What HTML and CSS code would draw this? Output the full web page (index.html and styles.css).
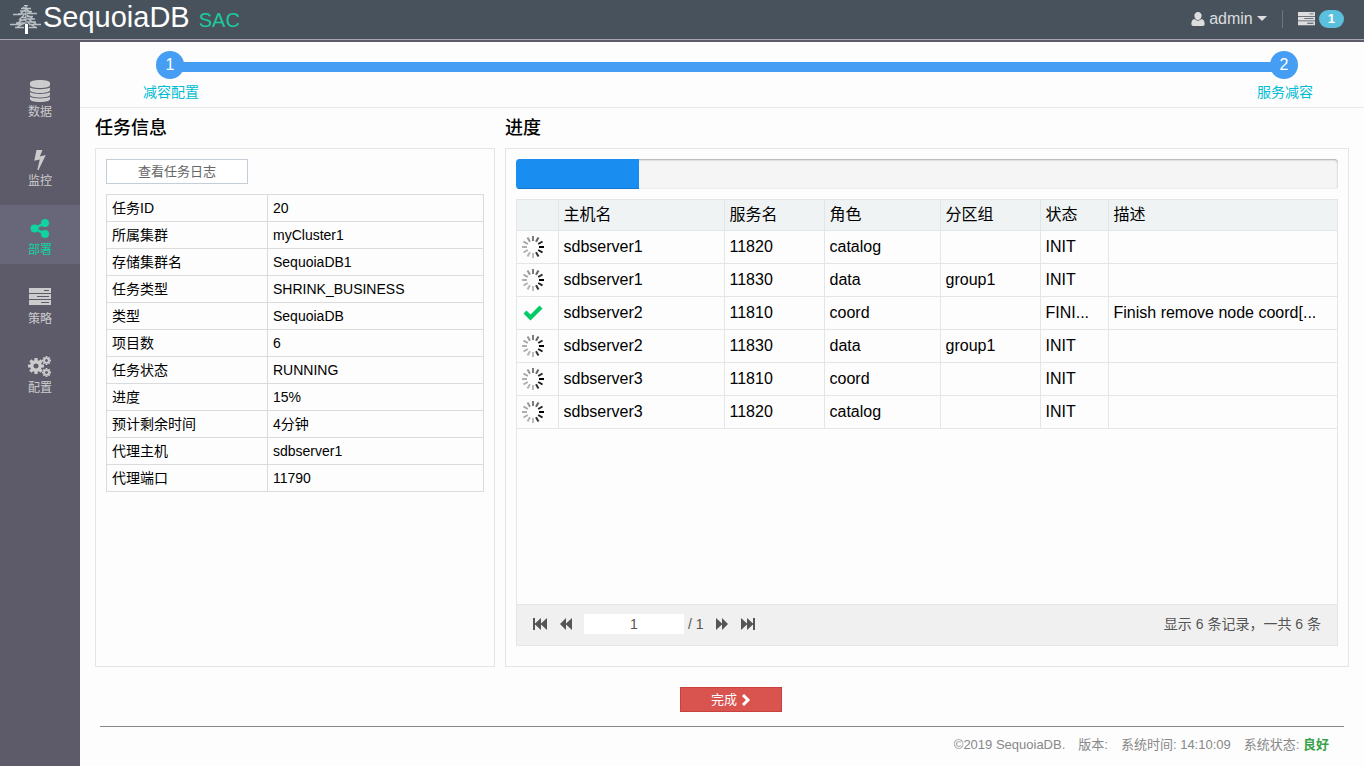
FILE: index.html
```
<!DOCTYPE html>
<html lang="zh-CN">
<head>
<meta charset="utf-8">
<title>SequoiaDB SAC</title>
<link rel="stylesheet" href="styles.css">
</head>
<body>
<svg class="defs" aria-hidden="true">
  <symbol id="servers" viewBox="0 0 22 18">
    <path fill="currentColor" fill-rule="evenodd" d="M0 0h22v5H0zM15 2v1h5V2zM0 6h22v5H0zM8 8v1h12V8zM0 12h22v5H0zM12 14v1h8v-1z"/>
  </symbol>
  <symbol id="spinner" viewBox="-11 -11 22 22">
    <g stroke="#000" stroke-width="2">
      <path d="M0-6V-11" opacity=".5"/>
      <path d="M0-6V-11" opacity=".6" transform="rotate(30)"/>
      <path d="M0-6V-11" opacity=".85" transform="rotate(60)"/>
      <path d="M0-6V-11" transform="rotate(90)"/>
      <path d="M0-6V-11" opacity=".9" transform="rotate(120)"/>
      <path d="M0-6V-11" opacity=".8" transform="rotate(150)"/>
      <path d="M0-6V-11" opacity=".25" transform="rotate(180)"/>
      <path d="M0-6V-11" opacity=".28" transform="rotate(210)"/>
      <path d="M0-6V-11" opacity=".3" transform="rotate(240)"/>
      <path d="M0-6V-11" opacity=".3" transform="rotate(270)"/>
      <path d="M0-6V-11" opacity=".35" transform="rotate(300)"/>
      <path d="M0-6V-11" opacity=".4" transform="rotate(330)"/>
    </g>
  </symbol>
  <symbol id="gear" viewBox="-10 -10 20 20">
    <circle r="5.3" fill="none" stroke="currentColor" stroke-width="4.2"/>
    <g stroke="currentColor" stroke-width="4">
      <path d="M0-6V-10M0 6V10M-6 0H-10M6 0H10"/>
      <path d="M0-6V-10M0 6V10M-6 0H-10M6 0H10" transform="rotate(45)"/>
    </g>
  </symbol>
</svg>
<header class="topbar">
  <a class="brand" href="#">
    <svg class="brand-tree" viewBox="0 0 32 30" aria-hidden="true">
      <path fill="none" stroke="#b9bfc3" stroke-width="1.300" d="M14 .7h4M11 3.500h10M13 2l6 4M10 6h6M17 6.500h5M8 9h8M3 9.500h8M17 8.500h10M17 6l6 3M15 5l-5 4M12 12.500h4M17 11.500h6M9 15h7M17 14h8M14 10l-5 5M17 10l6 4M6 18h9M17 17h9M15 14l-8 4M18 14l8 5M0 19.500h11M19 19.500h12M5 22.500h9M19 22.500h8M15 18l-8 4M18 18l9 5"/>
      <path fill="#fff" d="M15 19h3v10h-3z"/>
      <path fill="#d3d8dc" d="M15.500 0h1v19h-1z"/>
    </svg>
    <span class="brand-name">SequoiaDB</span>
    <span class="brand-sub">SAC</span>
  </a>
  <div class="tools">
    <button class="tool" type="button">
      <svg width="14" height="14" viewBox="0 0 14 14" aria-hidden="true"><path fill="currentColor" d="M7 0a3.600 3.600 0 0 1 3.600 4C10.500 6 9 8 7 8S3.500 6 3.400 4A3.600 3.600 0 0 1 7 0zM3.500 7Q7 10.500 10.500 7C13 7.500 14 10 13.500 13q-.5 1-2 1h-9q-1.500 0-2-1C0 10 1 7.500 3.500 7z"/></svg>
      <span>admin</span>
      <svg width="10" height="5" viewBox="0 0 10 5" aria-hidden="true"><path fill="currentColor" d="M0 0h10L5 5z"/></svg>
    </button>
    <span class="divider"></span>
    <button class="tool tasks" type="button" aria-label="任务">
      <svg width="17" height="14" aria-hidden="true"><use href="#servers"/></svg>
      <span class="badge">1</span>
    </button>
  </div>
</header>
<div class="shell">
  <nav class="sidebar">
    <a class="nav-item" href="#">
      <svg width="20" height="22" viewBox="0 0 20 22" aria-hidden="true"><path fill="currentColor" d="M0 3C0 1 4 0 10 0s10 1 10 3v2c0 2-4 3-10 3S0 7 0 5zM0 7.500c4 2.300 16 2.300 20 0V10c0 2-4 3-10 3S0 12 0 10zM0 12.300c4 2.300 16 2.300 20 0v2.200c0 2-4 3-10 3s-10-1-10-3zM0 16.800c4 2.300 16 2.300 20 0V19c0 2-4 3-10 3S0 21 0 19z"/></svg>
      <span>数据</span>
    </a>
    <a class="nav-item" href="#">
      <svg width="20" height="22" viewBox="0 0 20 22" aria-hidden="true"><path fill="currentColor" d="M6.500 1h6L9.800 7.400l6-1.500L8.500 21H7.300l2.500-10.500-5.600 1.300z"/></svg>
      <span>监控</span>
    </a>
    <a class="nav-item active" href="#">
      <svg width="20" height="22" viewBox="0 0 20 22" aria-hidden="true"><g fill="currentColor"><circle cx="4.500" cy="10.500" r="4"/><circle cx="15" cy="5" r="4"/><circle cx="15" cy="16" r="4"/></g><path fill="none" stroke="currentColor" stroke-width="2.500" d="M15 5L4.500 10.500 15 16"/></svg>
      <span>部署</span>
    </a>
    <a class="nav-item" href="#">
      <svg width="22" height="22" viewBox="0 0 22 22" aria-hidden="true"><use href="#servers" y="1" width="22" height="18"/></svg>
      <span>策略</span>
    </a>
    <a class="nav-item" href="#">
      <svg width="24" height="22" viewBox="0 0 24 22" aria-hidden="true"><use href="#gear" x="0" y="2" width="16" height="16"/><use href="#gear" x="14" y="0" width="9" height="9"/><use href="#gear" x="14" y="12" width="9" height="9"/></svg>
      <span>配置</span>
    </a>
  </nav>
  <main class="main">
    <ol class="steps">
      <li class="step"><span class="step-dot">1</span><span class="step-label">减容配置</span></li>
      <li class="step"><span class="step-dot">2</span><span class="step-label">服务减容</span></li>
    </ol>
    <div class="columns">
      <section class="column">
        <h2 class="title">任务信息</h2>
        <div class="panel">
          <button class="btn btn-log" type="button">查看任务日志</button>
          <table class="info">
            <tr><th scope="row">任务ID</th><td>20</td></tr>
            <tr><th scope="row">所属集群</th><td>myCluster1</td></tr>
            <tr><th scope="row">存储集群名</th><td>SequoiaDB1</td></tr>
            <tr><th scope="row">任务类型</th><td>SHRINK_BUSINESS</td></tr>
            <tr><th scope="row">类型</th><td>SequoiaDB</td></tr>
            <tr><th scope="row">项目数</th><td>6</td></tr>
            <tr><th scope="row">任务状态</th><td>RUNNING</td></tr>
            <tr><th scope="row">进度</th><td>15%</td></tr>
            <tr><th scope="row">预计剩余时间</th><td>4分钟</td></tr>
            <tr><th scope="row">代理主机</th><td>sdbserver1</td></tr>
            <tr><th scope="row">代理端口</th><td>11790</td></tr>
          </table>
        </div>
      </section>
      <section class="column">
        <h2 class="title">进度</h2>
        <div class="panel">
          <div class="progress" role="progressbar" aria-label="进度" aria-valuenow="15" aria-valuemin="0" aria-valuemax="100"><div class="progress-fill" style="width:15%"></div></div>
          <div class="grid">
            <table class="nodes">
              <colgroup><col class="c-icon"><col class="c-host"><col class="c-svc"><col class="c-role"><col class="c-group"><col class="c-state"><col></colgroup>
              <thead><tr><th></th><th>主机名</th><th>服务名</th><th>角色</th><th>分区组</th><th>状态</th><th>描述</th></tr></thead>
              <tbody>
                <tr><td><svg class="state" aria-hidden="true"><use href="#spinner"/></svg></td><td>sdbserver1</td><td>11820</td><td>catalog</td><td></td><td>INIT</td><td></td></tr>
                <tr><td><svg class="state" aria-hidden="true"><use href="#spinner"/></svg></td><td>sdbserver1</td><td>11830</td><td>data</td><td>group1</td><td>INIT</td><td></td></tr>
                <tr><td><svg class="state" viewBox="0 0 22 22" aria-hidden="true"><path fill="#0c6" d="M4.500 8.500l4 4L17.500 3.500l3 3L8.500 18.500l-7-7z"/></svg></td><td>sdbserver2</td><td>11810</td><td>coord</td><td></td><td>FINI...</td><td>Finish remove node coord[...</td></tr>
                <tr><td><svg class="state" aria-hidden="true"><use href="#spinner"/></svg></td><td>sdbserver2</td><td>11830</td><td>data</td><td>group1</td><td>INIT</td><td></td></tr>
                <tr><td><svg class="state" aria-hidden="true"><use href="#spinner"/></svg></td><td>sdbserver3</td><td>11810</td><td>coord</td><td></td><td>INIT</td><td></td></tr>
                <tr><td><svg class="state" aria-hidden="true"><use href="#spinner"/></svg></td><td>sdbserver3</td><td>11820</td><td>catalog</td><td></td><td>INIT</td><td></td></tr>
              </tbody>
            </table>
            <div class="pager">
              <button class="page-btn" type="button" aria-label="首页"><svg width="16" height="12" viewBox="0 0 16 12" aria-hidden="true"><path fill="currentColor" d="M1 0h2v5.500L9 0v5.500L15 0v12L9 6.500V12L3 6.500V12H1z"/></svg></button>
              <button class="page-btn" type="button" aria-label="上一页"><svg width="16" height="12" viewBox="0 0 16 12" aria-hidden="true"><path fill="currentColor" d="M8 0v5.500L14 0v12L8 6.500V12L2 6z"/></svg></button>
              <input class="page-input" type="text" value="1" aria-label="页码">
              <span class="page-total">/ 1</span>
              <button class="page-btn" type="button" aria-label="下一页"><svg width="16" height="12" viewBox="0 0 16 12" aria-hidden="true"><path fill="currentColor" d="M2 0l6 5.500V0l6 6-6 6V6.500L2 12z"/></svg></button>
              <button class="page-btn" type="button" aria-label="末页"><svg width="16" height="12" viewBox="0 0 16 12" aria-hidden="true"><path fill="currentColor" d="M1 0l6 5.500V0l6 5.500V0h2v12h-2V6.500L7 12V6.500L1 12z"/></svg></button>
              <span class="page-info">显示 6 条记录，一共 6 条</span>
            </div>
          </div>
        </div>
      </section>
    </div>
    <div class="actions">
      <button class="btn btn-done" type="button"><span>完成</span><svg width="10" height="12" viewBox="0 0 10 12" aria-hidden="true"><path fill="none" stroke="currentColor" stroke-width="3" d="M2 1l5 5-5 5"/></svg></button>
    </div>
    <footer class="footer">
      <span>©2019 SequoiaDB.</span>
      <span>版本:</span>
      <span>系统时间: 14:10:09</span>
      <span>系统状态: <b class="good">良好</b></span>
    </footer>
  </main>
</div>
</body>
</html>
```
FILE: styles.css
```
* { box-sizing: border-box; }
body {
  margin: 0;
  min-height: 100vh;
  display: flex;
  flex-direction: column;
  font-family: "Liberation Sans", "Noto Sans CJK SC", sans-serif;
  font-size: 14px;
  line-height: 20px;
  color: #000;
  background: #fdfdfd;
}
button, input { font: inherit; }
button { cursor: pointer; }
.defs { position: absolute; width: 0; height: 0; }

.topbar {
  height: 40px;
  display: flex;
  justify-content: space-between;
  padding: 0 20px 0 10px;
  background: #47525d;
  border-bottom: 1px solid #a6a6ae;
}
.brand { display: flex; align-items: baseline; text-decoration: none; }
.brand-tree { width: 32px; height: 30px; align-self: center; }
.brand-name { margin-left: 1px; font-size: 29px; line-height: 34px; color: #fff; }
.brand-sub { margin-left: 9px; font-size: 20px; color: #1dca9b; }
.tools { display: flex; align-items: center; gap: 15px; padding-bottom: 2px; }
.tool {
  display: flex;
  align-items: center;
  gap: 4px;
  padding: 0;
  border: 0;
  background: none;
  color: #ddd;
  font-size: 16px;
}
.divider { width: 1px; height: 18px; background: #6d757e; }
.badge {
  padding: 0 9px;
  border-radius: 9px;
  background: #5bc0de;
  color: #fff;
  font-size: 13px;
  font-weight: 700;
  line-height: 18px;
}

.shell { flex: 1; display: flex; }
.sidebar {
  width: 80px;
  flex: none;
  display: flex;
  flex-direction: column;
  gap: 10px;
  padding-top: 27px;
  background: #5d5b6a;
}
.nav-item {
  height: 59px;
  display: flex;
  flex-direction: column;
  align-items: center;
  padding-top: 13px;
  color: #ccc;
  font-size: 12px;
  text-decoration: none;
}
.nav-item.active { background: #686779; color: #10d3a0; }

.main {
  flex: 1;
  min-width: 0;
  display: flex;
  flex-direction: column;
  border-top: 2px solid #5d5b6a;
}
.steps {
  display: flex;
  justify-content: space-between;
  margin: 0;
  padding: 9px 48px 2px 63px;
  list-style: none;
  border-bottom: 1px solid #e5e9eb;
  background: linear-gradient(#459ef3, #459ef3) no-repeat 90px 20px / calc(100% - 170px) 10px;
}
.step { width: 59px; display: flex; flex-direction: column; }
.step-dot {
  width: 28px;
  margin-left: 13px;
  border-radius: 50%;
  background: #459ef3;
  color: #fff;
  font-size: 16px;
  line-height: 28px;
  text-align: center;
}
.step-label { line-height: 26px; color: #00bcd4; }

.columns {
  flex: 1;
  display: grid;
  grid-template-columns: 400px minmax(0, 1fr);
  gap: 10px;
  padding: 0 15px;
}
.column { display: flex; flex-direction: column; }
.title { margin: 0; font-size: 18px; font-weight: 500; line-height: 40px; }
.panel {
  flex: 1;
  display: flex;
  flex-direction: column;
  padding: 10px 10px 20px;
  border: 1px solid #e2e6e7;
}
.btn { height: 25px; padding: 0 29px; font-size: 13px; line-height: 23px; }
.btn-log {
  align-self: flex-start;
  width: 142px;
  border: 1px solid #c3ced9;
  background: #fff;
  color: #666;
}
.info, .nodes { border-collapse: collapse; table-layout: fixed; width: 100%; }
.info { margin-top: 10px; }
.info th, .info td {
  height: 27px;
  padding: 0 5px;
  border: 1px solid #d9dbdc;
  font-weight: 400;
  text-align: left;
}
.info th { width: 161px; }

.progress {
  height: 30px;
  overflow: hidden;
  border-radius: 4px;
  background: #f5f5f5;
  box-shadow: inset 0 1px 2px rgba(0, 0, 0, .3), inset 0 0 1px #ddd;
}
.progress-fill { height: 100%; background: #1a8df0; box-shadow: inset 0 -1px 0 #1277d0; }
.grid {
  flex: 1;
  display: flex;
  flex-direction: column;
  margin-top: 10px;
  border: 1px solid #e2e6e7;
}
.nodes { font-size: 16px; }
.nodes th, .nodes td {
  height: 33px;
  padding: 0 5px;
  border: 1px solid #e2e6e7;
  font-weight: 400;
  text-align: left;
  white-space: nowrap;
  overflow: hidden;
  text-overflow: ellipsis;
}
.nodes thead th { height: 30px; border-top: 0; background: #eff3f4; }
.nodes tr > :first-child { border-left: 0; }
.nodes tr > :last-child { border-right: 0; }
.c-icon { width: 41px; }
.c-host { width: 166px; }
.c-svc, .c-group { width: 100px; }
.c-role { width: 116px; }
.c-state { width: 68px; }
.state { display: block; width: 22px; height: 22px; }
.pager {
  height: 41px;
  display: flex;
  align-items: center;
  gap: 10px;
  margin-top: auto;
  padding: 0 16px 2px 15px;
  border-top: 1px solid #e2e6e7;
  background: #f0f0f0;
  color: #555;
}
.page-btn { display: flex; padding: 0; border: 0; background: none; color: #555; }
.page-input {
  width: 100px;
  height: 20px;
  padding: 0;
  border: 0;
  background: #fff;
  color: #555;
  text-align: center;
}
.page-total { margin-left: -6px; }
.page-info { margin-left: auto; }

.actions { display: flex; justify-content: center; padding: 20px 0 14px; }
.btn-done {
  width: 102px;
  display: flex;
  align-items: center;
  justify-content: center;
  gap: 4px;
  margin-left: 18px;
  border: 1px solid #c9403d;
  background: #d9534f;
  color: #fff;
}
.footer {
  display: flex;
  justify-content: flex-end;
  gap: 13px;
  margin: 0 20px;
  padding: 8px 15px 11px;
  border-top: 1px solid #888;
  color: #888;
  font-size: 13px;
}
.good { color: #3ba24b; }
```
